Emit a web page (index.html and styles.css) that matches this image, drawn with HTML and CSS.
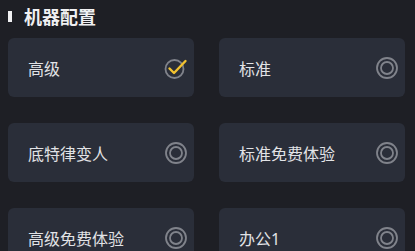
FILE: index.html
```html
<!DOCTYPE html>
<html lang="zh">
<head>
    <meta charset="UTF-8">
    <meta name="viewport" content="width=device-width, initial-scale=1.0">
    <title>机器配置</title>
    <link rel="stylesheet" href="styles.css">
</head>
<body>
    <div class="section">
        <h2 class="section-title">机器配置</h2>

        <div class="option-grid">
            <div class="option selected">
                <span class="option-name">高级</span>
                <svg class="option-icon" viewBox="0 0 24 24">
                    <circle cx="10.5" cy="13" r="9" fill="none" stroke="#80838b" stroke-width="1.8"/>
                    <path d="M5.5 12.5 L10 17 L21.5 5" fill="none" stroke="#f2c230" stroke-width="2.4" stroke-linecap="round" stroke-linejoin="round"/>
                </svg>
            </div>
            <div class="option">
                <span class="option-name">标准</span>
                <svg class="option-icon" viewBox="0 0 24 24">
                    <circle cx="12" cy="12" r="10" fill="none" stroke="#80838b" stroke-width="1.8"/>
                    <circle cx="12" cy="12" r="6" fill="none" stroke="#80838b" stroke-width="1.8"/>
                </svg>
            </div>
            <div class="option">
                <span class="option-name">底特律变人</span>
                <svg class="option-icon" viewBox="0 0 24 24">
                    <circle cx="12" cy="12" r="10" fill="none" stroke="#80838b" stroke-width="1.8"/>
                    <circle cx="12" cy="12" r="6" fill="none" stroke="#80838b" stroke-width="1.8"/>
                </svg>
            </div>
            <div class="option">
                <span class="option-name">标准免费体验</span>
                <svg class="option-icon" viewBox="0 0 24 24">
                    <circle cx="12" cy="12" r="10" fill="none" stroke="#80838b" stroke-width="1.8"/>
                    <circle cx="12" cy="12" r="6" fill="none" stroke="#80838b" stroke-width="1.8"/>
                </svg>
            </div>
            <div class="option">
                <span class="option-name">高级免费体验</span>
                <svg class="option-icon" viewBox="0 0 24 24">
                    <circle cx="12" cy="12" r="10" fill="none" stroke="#80838b" stroke-width="1.8"/>
                    <circle cx="12" cy="12" r="6" fill="none" stroke="#80838b" stroke-width="1.8"/>
                </svg>
            </div>
            <div class="option">
                <span class="option-name">办公1</span>
                <svg class="option-icon" viewBox="0 0 24 24">
                    <circle cx="12" cy="12" r="10" fill="none" stroke="#80838b" stroke-width="1.8"/>
                    <circle cx="12" cy="12" r="6" fill="none" stroke="#80838b" stroke-width="1.8"/>
                </svg>
            </div>
        </div>
    </div>
</body>
</html>
```

FILE: styles.css
```css
body {
    font-family: "Noto Sans", "Noto Sans CJK SC", sans-serif;
    background-color: #1e1f25;
    color: #e2e3e6;
    margin: 0;
    overflow: hidden;
}
.section {
    padding: 5px 10px 0 8px;
}
.section-title {
    display: flex;
    align-items: center;
    margin: 0;
    height: 22px;
    font-size: 18px;
    font-weight: bold;
    color: #f0f0f2;
}
.section-title::before {
    content: "";
    display: block;
    width: 4px;
    height: 11px;
    background-color: #f0f0f2;
    margin-right: 12px;
}

/* Сетка вариантов */
.option-grid {
    display: grid;
    grid-template-columns: 1fr 1fr;
    column-gap: 25px;
    row-gap: 26px;
    margin-top: 11px;
}
.option {
    display: flex;
    align-items: center;
    justify-content: space-between;
    height: 59px;
    padding: 0 6px 0 20px;
    background-color: #2a2e39;
    border-radius: 6px;
    box-sizing: border-box;
}
.option-name {
    font-size: 16px;
}
.option-icon {
    width: 24px;
    height: 24px;
}
```
